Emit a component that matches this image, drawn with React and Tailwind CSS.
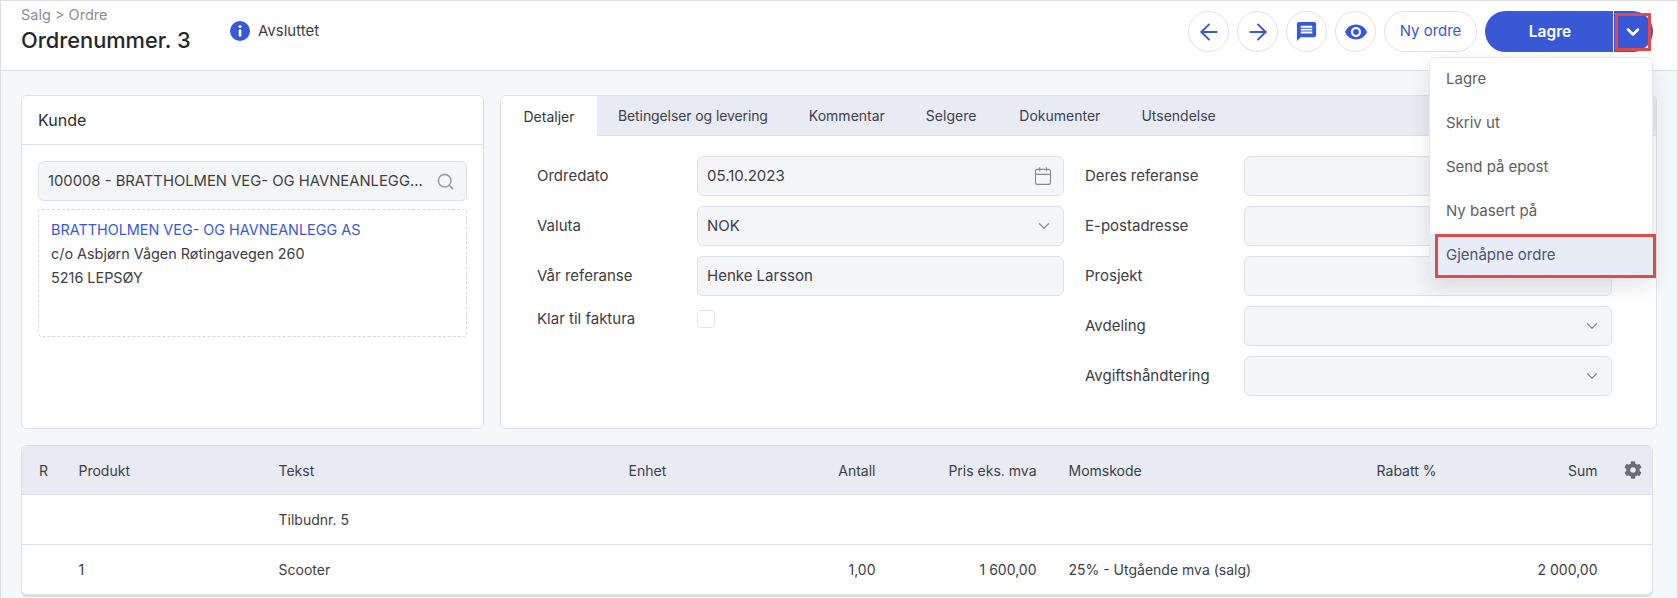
import { ArrowLeft, ArrowRight, Calendar, ChevronDown, Search } from 'lucide-react';
import { FaCog } from 'react-icons/fa';
import { MdMessage, MdVisibility } from 'react-icons/md';

const menuItems = ['Lagre', 'Skriv ut', 'Send på epost', 'Ny basert på'];
const rowGrid = 'grid grid-cols-[39.5px_200px_350px_132px_115px_161px_264px_136px_161px_1fr] items-center pl-[17px]';

function InfoIcon() {
  return (
    <svg width="20" height="20" viewBox="0 0 20 20">
      <circle cx="10" cy="10" r="10" fill="#3858d6" />
      <circle cx="10" cy="5.6" r="1.5" fill="#fff" />
      <rect x="8.7" y="8.4" width="2.6" height="7" rx="0.6" fill="#fff" />
    </svg>
  );
}

function RoundButton({ children }) {
  return (
    <button className="flex h-[41px] w-[41px] items-center justify-center rounded-full border border-[#dfe1e5] bg-white text-[#3858d6]">
      {children}
    </button>
  );
}

function Field({ children, icon, width = 'w-[367px]' }) {
  return (
    <div className={`flex h-10 ${width} items-center justify-between rounded-md border border-[#dfe1e6] bg-[#f4f5f7] pl-[9px] pr-[10px] text-[15px] leading-[20px] text-[#3c4045]`}>
      <span>{children}</span>
      {icon}
    </div>
  );
}

function FormRow({ label, labelWidth, children }) {
  return (
    <div className="flex items-center">
      <div className={`${labelWidth} text-[15px] leading-[20px] text-[#3c4045]`}>{label}</div>
      {children}
    </div>
  );
}

const chevron = <ChevronDown size={18} strokeWidth={1.5} className="text-[#85898f]" />;

export default function App() {
  return (
    <div className="relative h-[598px] w-[1678px] overflow-hidden border border-b-0 border-[#dcdee1] bg-[#f5f7f9] font-['Inter',sans-serif] text-[14px] text-[#3c4045]">
      <header className="flex h-[70px] justify-between border-b border-[#dcdee1] bg-white pl-5 pr-[24px]">
        <div className="flex">
          <div className="w-[209px] pt-[5px]">
            <div className="text-[14.5px] leading-[18px] text-[#8b8f94]">Salg &gt; Ordre</div>
            <div className="mt-[3px] text-[21.8px] font-medium leading-[27px] text-[#24272b]">Ordrenummer. 3</div>
          </div>
          <div className="flex h-[60px] items-center gap-2">
            <InfoIcon />
            <span className="text-[15px]">Avsluttet</span>
          </div>
        </div>
        <div className="flex items-start gap-2 pt-[10px]">
          <RoundButton><ArrowLeft size={26} strokeWidth={1.8} /></RoundButton>
          <RoundButton><ArrowRight size={26} strokeWidth={1.8} /></RoundButton>
          <RoundButton><MdMessage size={23} /></RoundButton>
          <RoundButton><MdVisibility size={24} /></RoundButton>
          <button className="h-[41px] w-[93px] rounded-full border border-[#dfe1e5] bg-white text-[15px] text-[#3858d6]">Ny ordre</button>
          <div className="relative flex h-[41px] w-[168px] overflow-hidden rounded-full bg-[#3858d6] text-white">
            <div className="flex w-[128px] items-center justify-center pl-[2px] text-[15.5px] font-semibold">Lagre</div>
            <div className="flex flex-1 items-center justify-center border-l border-white pr-[2px]">
              <ChevronDown size={20} strokeWidth={3} />
            </div>
          </div>
        </div>
      </header>

      <main className="px-5 pt-6">
        <div className="flex h-[334px] gap-4">
          <section className="w-[463px] rounded-md border border-[#dfe1e6] bg-white">
            <div className="flex h-[49px] items-center border-b border-[#dfe1e6] pl-4 text-[16px] leading-none text-[#2b2e33]">Kunde</div>
            <div className="px-4 pt-4">
              <div className="flex h-10 items-center justify-between rounded-md border border-[#dfe1e6] bg-[#f4f5f7] pl-[9px] pr-[11px]">
                <span className="whitespace-nowrap text-[14.8px]">100008 - BRATTHOLMEN VEG- OG HAVNEANLEGG...</span>
                <Search size={19} strokeWidth={2} className="shrink-0 text-[#9a9da1]" />
              </div>
              <div className="mt-2 h-[128px] rounded border border-dashed border-[#d5d8dc] px-3 pt-2 text-[14.4px] leading-6">
                <div className="text-[#3858d6]">BRATTHOLMEN VEG- OG HAVNEANLEGG AS</div>
                <div>c/o Asbjørn Vågen Røtingavegen 260</div>
                <div>5216 LEPSØY</div>
              </div>
            </div>
          </section>

          <section className="flex-1 overflow-hidden rounded-md border border-[#dfe1e6] bg-white">
            <nav className="flex h-10 border-b border-[#dfe1e6] bg-[#e8ebf3] text-[#3a4250]">
              <div className="-mb-px flex w-[96px] items-center justify-center bg-white text-[#2f3744]">Detaljer</div>
              <div className="flex items-center pl-[21px]">
                <span className="tracking-[-0.1px]">Betingelser og levering</span>
                <span className="ml-[41px]">Kommentar</span>
                <span className="ml-[41px]">Selgere</span>
                <span className="ml-[43px]">Dokumenter</span>
                <span className="ml-[41px]">Utsendelse</span>
              </div>
            </nav>
            <div className="flex pl-9 pt-5">
              <div className="flex w-[548px] flex-col gap-[10px]">
                <FormRow label="Ordredato" labelWidth="w-[160px]">
                  <Field icon={<Calendar size={20} strokeWidth={1.3} className="text-[#85898f]" />}>05.10.2023</Field>
                </FormRow>
                <FormRow label="Valuta" labelWidth="w-[160px]">
                  <Field icon={chevron}>NOK</Field>
                </FormRow>
                <FormRow label="Vår referanse" labelWidth="w-[160px]">
                  <Field>Henke Larsson</Field>
                </FormRow>
                <div className="pt-[3px]">
                  <FormRow label="Klar til faktura" labelWidth="w-[160px]">
                    <div className="h-[18px] w-[18px] rounded border border-[#e2e4e8] bg-white" />
                  </FormRow>
                </div>
              </div>
              <div className="flex flex-col gap-[10px]">
                <FormRow label="Deres referanse" labelWidth="w-[159px]"><Field width="w-[368px]" /></FormRow>
                <FormRow label="E-postadresse" labelWidth="w-[159px]"><Field width="w-[368px]" /></FormRow>
                <FormRow label="Prosjekt" labelWidth="w-[159px]"><Field width="w-[368px]" icon={chevron} /></FormRow>
                <FormRow label="Avdeling" labelWidth="w-[159px]"><Field width="w-[368px]" icon={chevron} /></FormRow>
                <FormRow label="Avgiftshåndtering" labelWidth="w-[159px]"><Field width="w-[368px]" icon={chevron} /></FormRow>
              </div>
            </div>
          </section>
        </div>

        <section className="mt-4 w-[1632px] overflow-hidden rounded-md border border-[#dfe1e6] bg-white shadow-[0_2px_0_#dcdee1]">
          <div className={`${rowGrid} h-[49px] border-b border-[#dfe1e6] bg-[#e8ebf3]`}>
            <span>R</span>
            <span>Produkt</span>
            <span>Tekst</span>
            <span>Enhet</span>
            <span className="text-right">Antall</span>
            <span className="text-right">Pris eks. mva</span>
            <span className="pl-8">Momskode</span>
            <span className="text-right">Rabatt %</span>
            <span className="text-right">Sum</span>
            <span className="flex justify-end pr-[10px] text-[#6a6e73]"><FaCog size={18} /></span>
          </div>
          <div className={`${rowGrid} h-[50px] border-b border-[#dfe1e6]`}>
            <span />
            <span />
            <span>Tilbudnr. 5</span>
          </div>
          <div className={`${rowGrid} h-[49px]`}>
            <span />
            <span>1</span>
            <span>Scooter</span>
            <span />
            <span className="text-right">1,00</span>
            <span className="text-right">1 600,00</span>
            <span className="pl-8">25% - Utgående mva (salg)</span>
            <span />
            <span className="text-right">2 000,00</span>
          </div>
        </section>
      </main>

      {/* red markers and the open menu lie over the page */}
      <div className="absolute left-[1614px] top-[12px] h-[38px] w-[36px] border-[3px] border-[#dd4b4b]" />
      <div className="absolute left-[1428px] top-[56px] w-[224px] rounded-md border border-[#e6e8eb] bg-white text-[15px] shadow-[0_8px_20px_rgba(40,50,70,0.12)]">
        {menuItems.map((item) => (
          <div key={item} className="flex h-11 items-center pb-[2px] pl-4 text-[#5b6066]">{item}</div>
        ))}
        <div className="relative flex h-11 items-center bg-[#e8ecf6] pb-[2px] pl-4 text-[#4a5570]">
          Gjenåpne ordre
          <div className="absolute -right-[4px] bottom-0 left-[5px] top-0 border-[3px] border-[#dd4b4b]" />
        </div>
      </div>
    </div>
  );
}
